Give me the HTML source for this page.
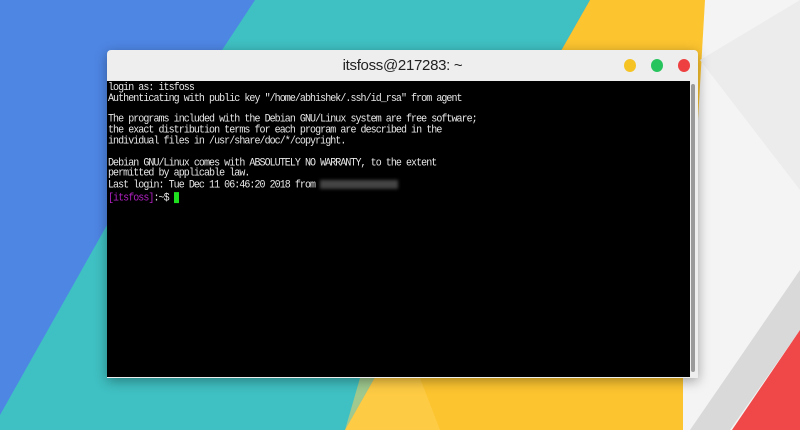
<!DOCTYPE html>
<html><head><meta charset="utf-8"><style>
html,body{margin:0;padding:0;width:800px;height:430px;overflow:hidden}
body{position:relative;background:#4e86e4}
svg.bg{position:absolute;left:0;top:0}
.win{position:absolute;left:107px;top:50px;width:591px;height:328px;background:#eeeeee;border-radius:4px 4px 0 0;box-shadow:0 3px 12px rgba(0,0,0,.35)}
.title{position:absolute;left:0;top:0;width:591px;height:31px;text-align:center;font:15px/31px "Liberation Sans",sans-serif;color:#222;letter-spacing:-0.3px}
.dot{position:absolute;top:9px;width:12px;height:13px;border-radius:50%}
.term{position:absolute;left:0;top:31px;width:583px;height:296px;background:#000;overflow:hidden}
.sb{position:absolute;left:584px;top:34px;width:4px;height:288px;background:#9a9a9a;border-radius:2px}
pre{margin:0;padding:2px 0 0 1px;font:10px/9.8px "Liberation Mono",monospace;color:#e8e8e8;letter-spacing:-0.95px;transform:scaleY(1.1);transform-origin:0 0}
.blur{display:inline-block;width:78px;height:8px;background:#444;filter:blur(1.5px);vertical-align:middle}
.cur{display:inline-block;width:5px;height:10px;background:#1ee01e;vertical-align:middle}
</style></head><body>
<svg class="bg" width="800" height="430">
<rect width="800" height="430" fill="#4e86e4"/>
<polygon points="255,0 590,0 345,430 0,430 0,415 107,225" fill="#3fc0c2"/>
<polygon points="590,0 705,0 705,430 345,430" fill="#fcc42f"/>
<polygon points="360,378 420,378 440,430 345,430" fill="#ffd25a" opacity=".5"/>
<polygon points="705,0 800,0 800,430 683,430 683,378" fill="#f4f4f4"/>
<polygon points="700,60 800,0 800,190" fill="#ececec"/>
<polygon points="690,430 800,270 800,330 730,430" fill="#d9d9d9"/>
<polygon points="732,430 800,330 800,430" fill="#f04848"/>
</svg>
<div class="win">
<div class="title">itsfoss@217283: ~</div>
<div class="dot" style="left:517px;background:#f5c324"></div>
<div class="dot" style="left:544px;background:#27c45e"></div>
<div class="dot" style="left:571px;background:#ee4040"></div>
<div class="term"><pre>login as: itsfoss
Authenticating with public key "/home/abhishek/.ssh/id_rsa" from agent

The programs included with the Debian GNU/Linux system are free software;
the exact distribution terms for each program are described in the
individual files in /usr/share/doc/*/copyright.

Debian GNU/Linux comes with ABSOLUTELY NO WARRANTY, to the extent
permitted by applicable law.
Last login: Tue Dec 11 06:46:20 2018 from <span class="blur"></span>
<span style="color:#b020c0">[itsfoss]</span>:~$ <span class="cur"></span></pre></div>
<div class="sb"></div>
</div>
</body></html>
